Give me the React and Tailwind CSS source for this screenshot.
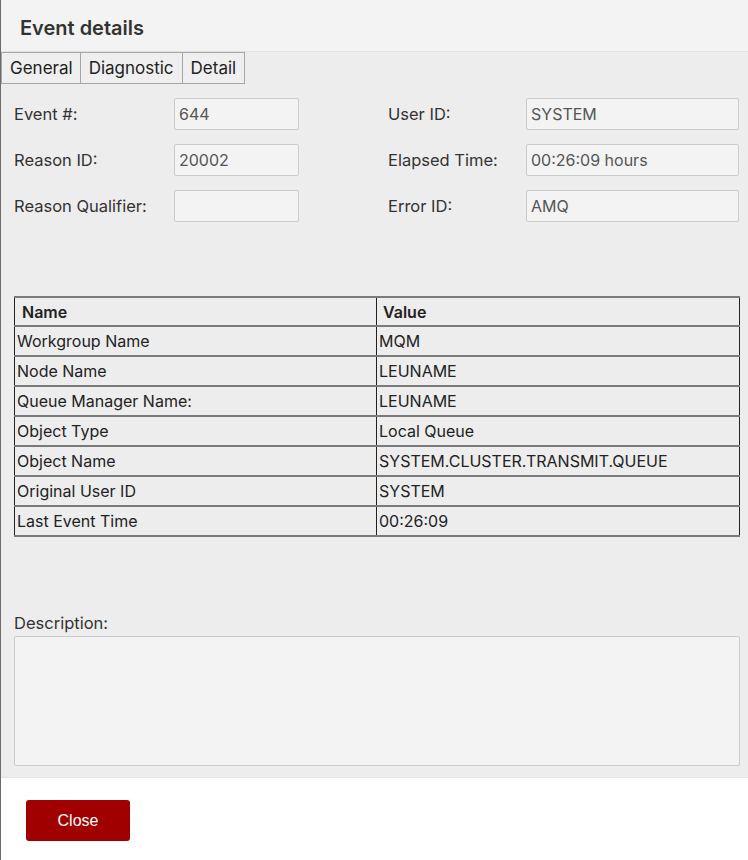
import React from "react";

const font = { fontFamily: "Inter, 'Noto Sans', sans-serif" };

function Field({ label, value, labelW, inputW }) {
  return (
    <div className="flex items-center">
      <div className={`${labelW} text-[16.5px] text-[#333]`}>{label}</div>
      <div className={`${inputW} h-[32px] bg-[#f3f3f3] border border-[#cccccc] rounded-[2px] px-[4px] flex items-center text-[16px] text-[#555]`}>
        {value}
      </div>
    </div>
  );
}

const rows = [
  ["Workgroup Name", "MQM"],
  ["Node Name", "LEUNAME"],
  ["Queue Manager Name:", "LEUNAME"],
  ["Object Type", "Local Queue"],
  ["Object Name", "SYSTEM.CLUSTER.TRANSMIT.QUEUE"],
  ["Original User ID", "SYSTEM"],
  ["Last Event Time", "00:26:09"],
];

export default function App() {
  return (
    <div className="w-[748px] h-[860px] flex flex-col border-l border-[#6b6b6b] bg-white" style={font}>
      <div className="h-[52px] bg-[#f3f3f3] border-b border-[#e2e2e2] flex items-start pt-[15px] pl-[19px]">
        <div className="text-[20px] leading-[26px] font-semibold text-[#333]">Event details</div>
      </div>
      <div className="h-[726px] bg-[#ededed] border-b border-[#e4e4e4] flex flex-col">
        <div className="flex h-[32px] text-[17px] text-[#222]">
          <div className="pl-[8px] pr-[7px] pt-[2px] flex items-center border-[1.5px] border-[#a6a6a6] bg-[#efefef]">General</div>
          <div className="px-[8px] pt-[2px] flex items-center border-[1.5px] border-l-0 border-[#a6a6a6] bg-[#efefef]">Diagnostic</div>
          <div className="px-[8px] pt-[2px] flex items-center border-[1.5px] border-l-0 border-[#a6a6a6] bg-[#efefef]">Detail</div>
        </div>
        <div className="pl-[13px] pr-[8px] pt-[14px] flex flex-col gap-[14px]">
          <div className="flex gap-[89px]">
            <Field label="Event #:" value="644" labelW="w-[160px]" inputW="w-[125px]" />
            <Field label="User ID:" value="SYSTEM" labelW="w-[138px]" inputW="w-[213px]" />
          </div>
          <div className="flex gap-[89px]">
            <Field label="Reason ID:" value="20002" labelW="w-[160px]" inputW="w-[125px]" />
            <Field label="Elapsed Time:" value="00:26:09 hours" labelW="w-[138px]" inputW="w-[213px]" />
          </div>
          <div className="flex gap-[89px]">
            <Field label="Reason Qualifier:" value="" labelW="w-[160px]" inputW="w-[125px]" />
            <Field label="Error ID:" value="AMQ" labelW="w-[138px]" inputW="w-[213px]" />
          </div>
        </div>
        <div className="pl-[13px] pr-[8px] mt-[74px]">
          <table className="w-[726px] border-collapse text-[16px] text-[#222]">
            <thead>
              <tr className="h-[29px] border-t-2 border-[#7a7a7a]">
                <th className="w-[362px] text-left font-semibold pl-[7px] border-l border-r border-[#222]">Name</th>
                <th className="text-left font-semibold pl-[6px] border-r border-[#222]">Value</th>
              </tr>
            </thead>
            <tbody>
              {rows.map(([n, v]) => (
                <tr key={n} className="h-[30px] border-t-2 border-[#7a7a7a]">
                  <td className="pl-[2px] pb-[1px] border-l border-r border-[#222]">{n}</td>
                  <td className="pl-[2px] pb-[1px] border-r border-[#222]">{v}</td>
                </tr>
              ))}
              <tr className="border-t-2 border-[#7a7a7a]"><td colSpan={2}></td></tr>
            </tbody>
          </table>
        </div>
        <div className="pl-[13px] pr-[8px] mt-[76px]">
          <div className="text-[16.5px] text-[#333] leading-[20px]">Description:</div>
          <div className="mt-[3px] h-[130px] bg-[#f3f3f3] border border-[#cccccc] rounded-[2px]"></div>
        </div>
      </div>
      <div className="flex-1 bg-white pl-[25px] pt-[22px]">
        <button className="w-[104px] h-[41px] bg-[#a00000] rounded-[3px] text-white text-[16px]" style={{ fontFamily: "'Liberation Sans', Arial, sans-serif" }}>
          Close
        </button>
      </div>
    </div>
  );
}
